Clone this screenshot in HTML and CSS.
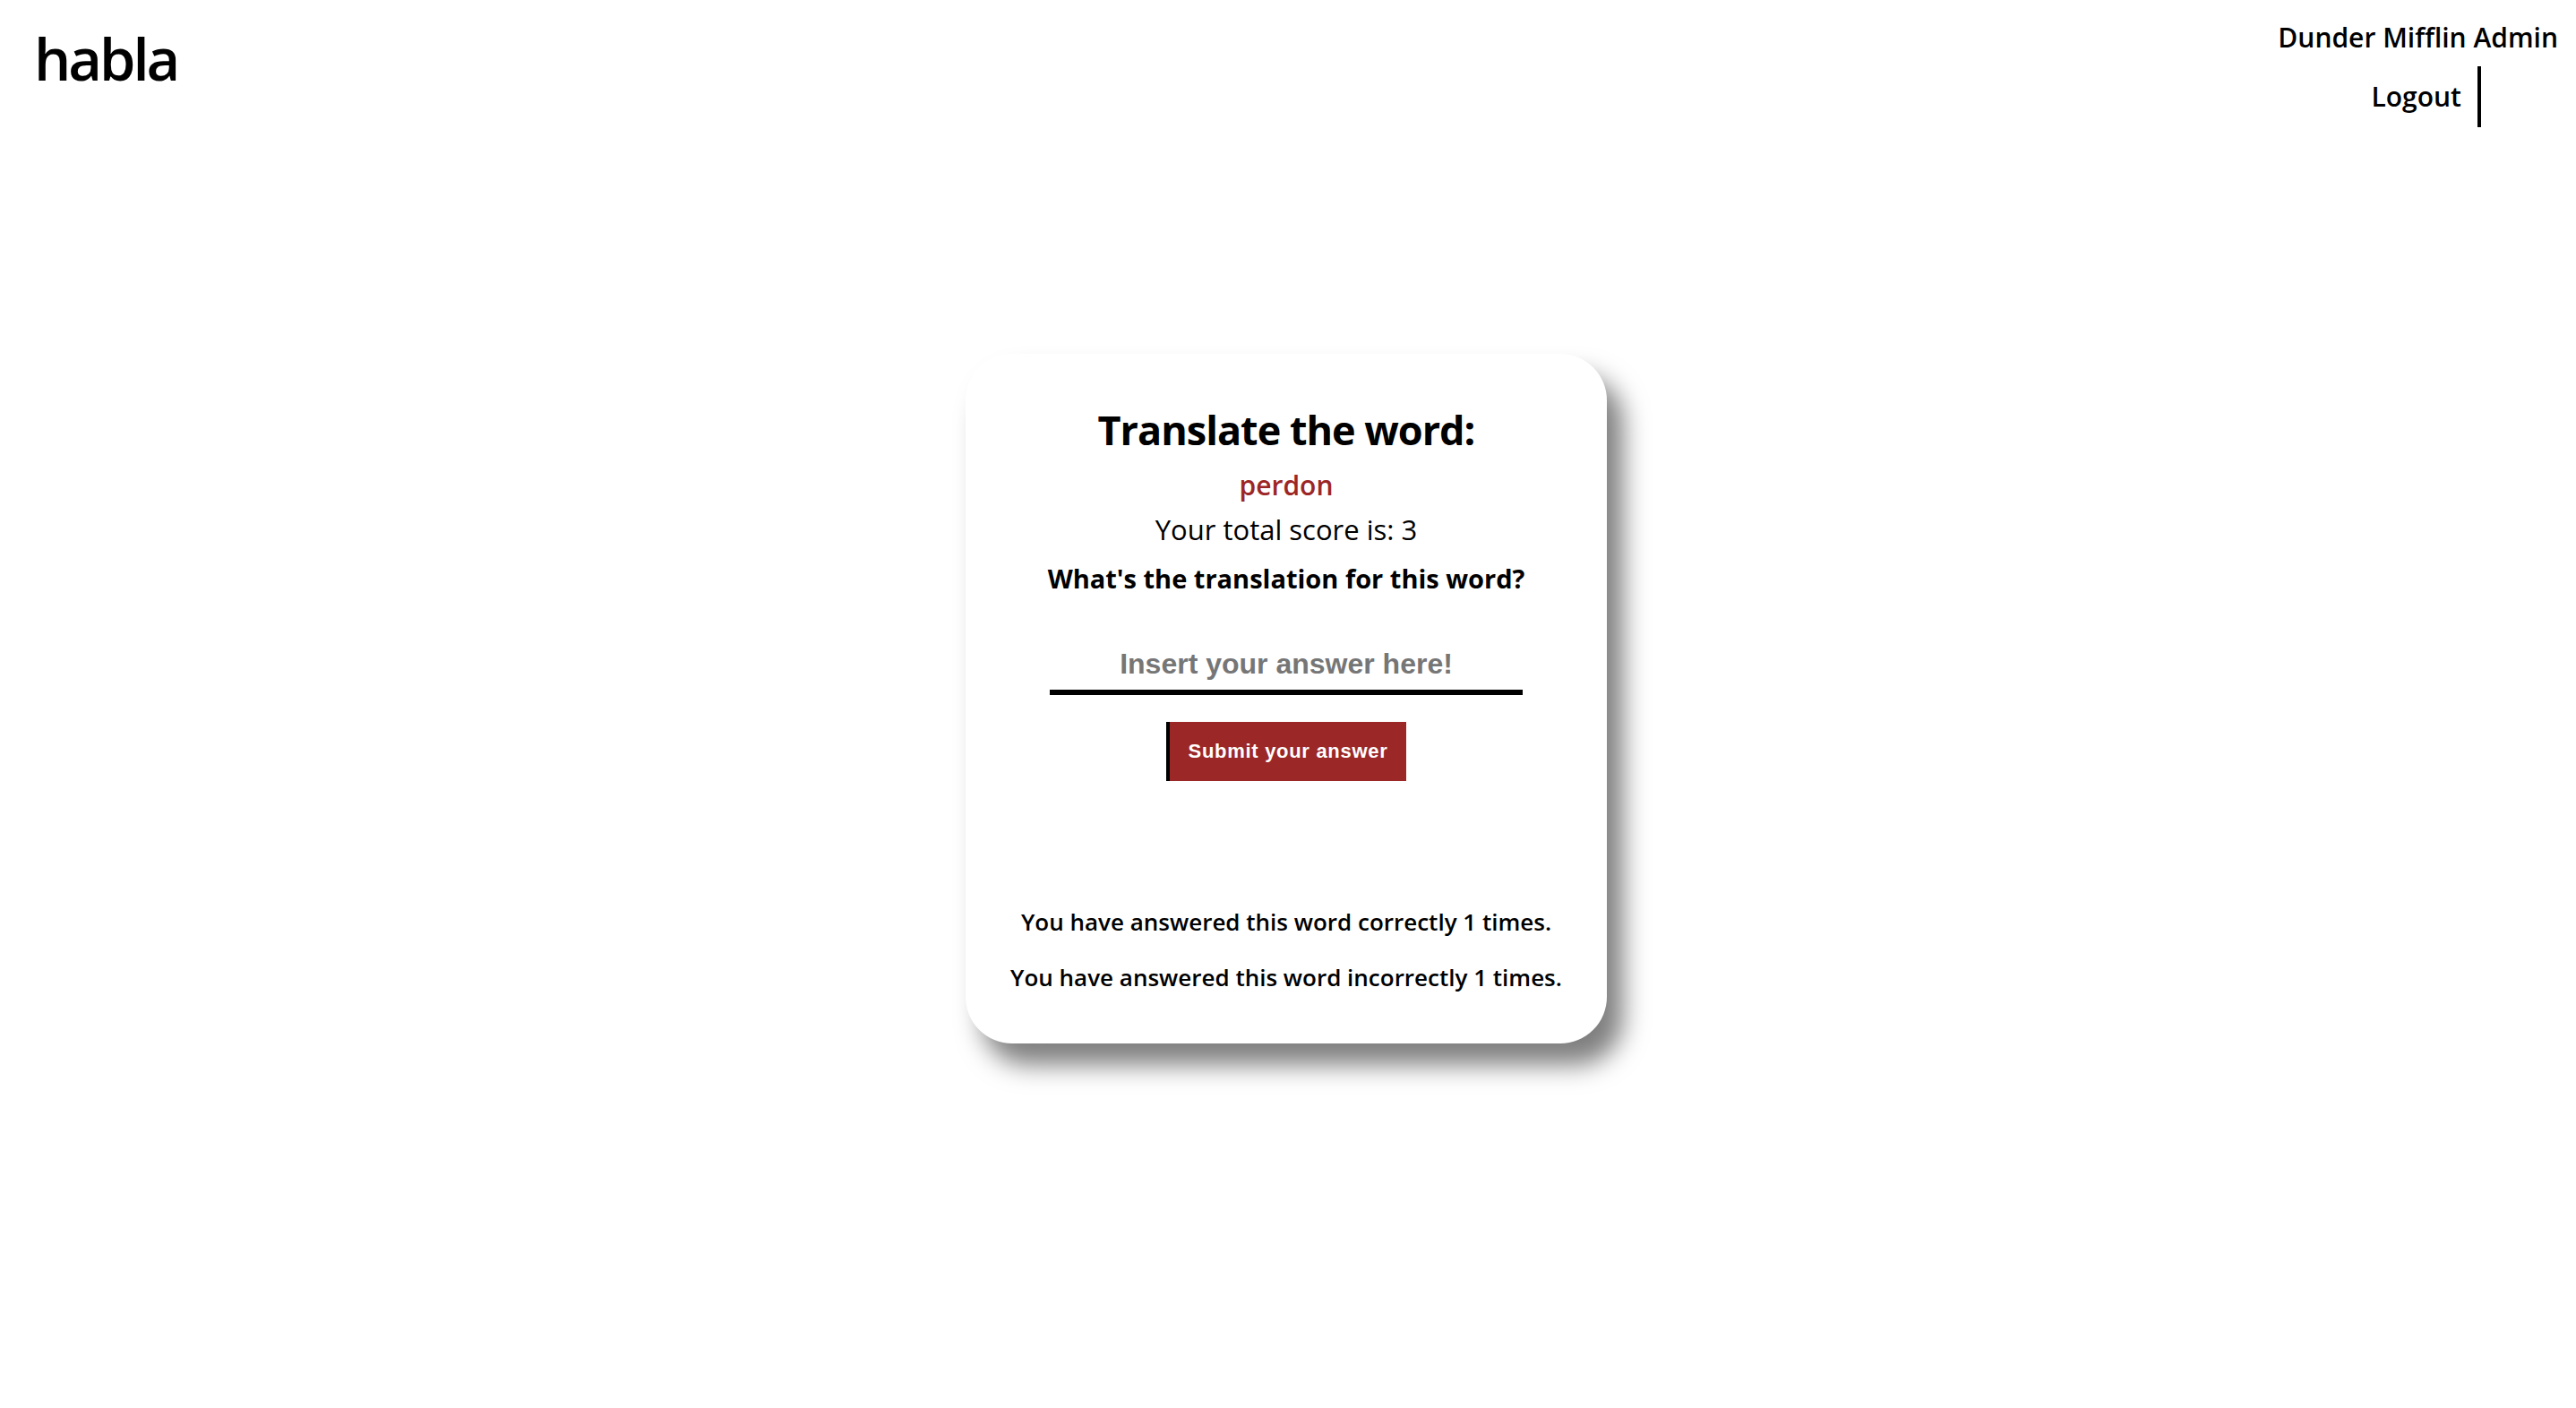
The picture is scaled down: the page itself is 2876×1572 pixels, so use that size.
FILE: index.html
```html
<!DOCTYPE html>
<html lang="en">
<head>
<meta charset="utf-8">
<title>habla</title>
<link rel="stylesheet" href="styles.css">
</head>
<body>
<header class="topbar">
  <div class="logo">habla</div>
  <nav class="user-nav">
    <div class="user-name">Dunder Mifflin Admin</div>
    <a class="logout" href="#">Logout</a>
  </nav>
</header>
<main class="main">
  <section class="card">
    <h2 class="card-title">Translate the word:</h2>
    <div class="word">perdon</div>
    <div class="score">Your total score is: 3</div>
    <div class="question">What's the translation for this word?</div>
    <form class="answer-form">
      <input class="answer-input" type="text" placeholder="Insert your answer here!">
      <button class="submit-btn" type="submit">Submit your answer</button>
    </form>
    <div class="stats">
      <p class="stat">You have answered this word correctly 1 times.</p>
      <p class="stat">You have answered this word incorrectly 1 times.</p>
    </div>
  </section>
</main>
</body>
</html>
```

FILE: styles.css
```css
html, body {
  margin: 0;
  padding: 0;
  background: #ffffff;
}

body {
  font-family: "Open Sans", "Noto Sans", sans-serif;
  color: #000;
}

.topbar {
  display: flex;
  justify-content: space-between;
  align-items: flex-start;
  padding: 0 20px 0 38px;
}

.logo {
  margin-top: 32px;
  font-size: 65px;
  line-height: 66px;
  font-weight: 600;
  letter-spacing: -3px;
}

.user-nav {
  display: flex;
  flex-direction: column;
  align-items: center;
  padding-top: 22px;
}

.user-name {
  font-size: 30px;
  line-height: 40px;
  font-weight: 600;
}

.logout {
  margin-top: 12px;
  padding: 0 18px;
  font-size: 30px;
  line-height: 68px;
  font-weight: 600;
  color: #000;
  text-decoration: none;
  border-right: 4px solid #000;
}

.main {
  display: flex;
  justify-content: center;
  padding: 253px 4px 120px 0;
}

.card {
  width: 716px;
  box-sizing: border-box;
  padding: 57px 20px 54px;
  border-radius: 52px;
  background: #fff;
  box-shadow: 18px 24px 28px #7f7f7f;
  text-align: center;
}

.card-title {
  margin: 0;
  font-size: 45px;
  line-height: 56px;
  font-weight: 700;
  letter-spacing: -1px;
}

.word {
  margin-top: 14px;
  font-size: 30px;
  line-height: 40px;
  font-weight: 600;
  color: #9c2626;
}

.score {
  margin-top: 9px;
  font-size: 31px;
  line-height: 40px;
  font-weight: 400;
}

.question {
  margin-top: 15px;
  font-size: 29px;
  line-height: 40px;
  font-weight: 700;
}

.answer-form {
  display: flex;
  flex-direction: column;
  align-items: center;
  margin-top: 55px;
}

.answer-input {
  width: 528px;
  height: 55px;
  box-sizing: border-box;
  padding: 0 0 9px;
  border: none;
  border-bottom: 6px solid #000;
  outline: none;
  background: transparent;
  font-family: "Liberation Sans", Arial, sans-serif;
  font-size: 32px;
  line-height: 40px;
  font-weight: 700;
  text-align: center;
}

.answer-input::placeholder {
  color: #767676;
}

.submit-btn {
  margin-top: 30px;
  width: 268px;
  height: 66px;
  padding: 0;
  border: none;
  border-left: 4px solid #000;
  background: #9b2727;
  color: #fff;
  font-family: "Liberation Sans", Arial, sans-serif;
  font-size: 22px;
  font-weight: 700;
  letter-spacing: 0.7px;
  white-space: nowrap;
  cursor: pointer;
}

.stats {
  margin-top: 137px;
}

.stat {
  margin: 0;
  font-size: 26px;
  line-height: 40px;
  font-weight: 600;
}

.stat + .stat {
  margin-top: 22px;
}
```
